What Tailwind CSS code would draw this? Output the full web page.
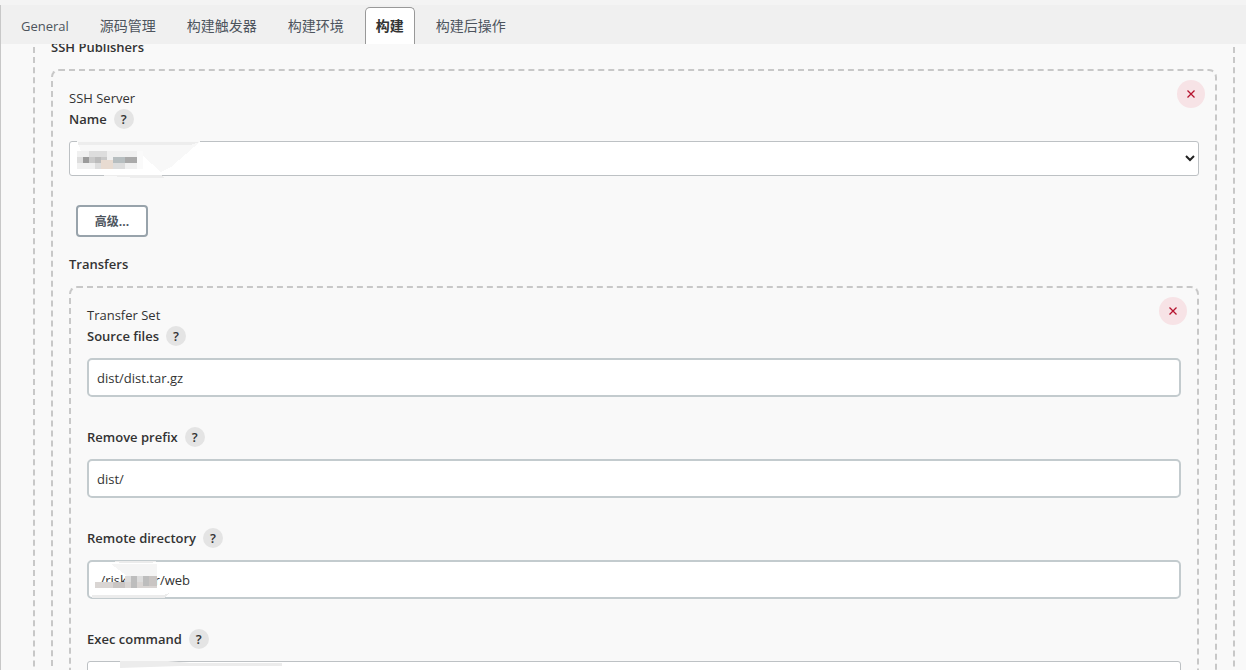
<!DOCTYPE html>
<html lang="zh-CN">
<head>
<meta charset="utf-8">
<meta name="viewport" content="width=device-width, initial-scale=1">
<title>构建</title>
<script src="https://cdn.jsdelivr.net/npm/@tailwindcss/browser@4"></script>
</head>
<body class="h-screen overflow-hidden bg-[#f9f9f9] font-['Open_Sans','Noto_Sans_CJK_SC',sans-serif] text-[13px] leading-[21px] text-[#333]">
<div class="flex h-full flex-col">
  <header class="relative z-10 h-11 shrink-0 border-t-[5px] border-[#f4f4f4] bg-[#f0f0f0]">
    <nav class="flex h-full items-end border-l border-[#c8c8c8] pl-2 text-[14px] text-[#4d545d]">
      <a href="#general" class="px-3 pb-[7px] text-[13px]">General</a>
      <a href="#scm" class="ml-[7px] px-3 pb-2">源码管理</a>
      <a href="#triggers" class="ml-[7px] px-3 pb-2">构建触发器</a>
      <a href="#env" class="ml-[7px] px-3 pb-2">构建环境</a>
      <a href="#build" aria-current="page" class="ml-[9px] rounded-t-[5px] border border-b-0 border-[#999] bg-white px-[10px] pt-[7px] pb-2 font-bold text-[#333]">构建</a>
      <a href="#post" class="ml-[9px] px-3 pb-2">构建后操作</a>
    </nav>
  </header>
  <main class="min-h-0 flex-1 overflow-hidden border-l border-[#c8c8c8] pr-[11px] pl-8">
    <section class="-mt-[7px] border-x-2 border-dashed border-[#c8c8c8] px-4">
      <h2 class="font-semibold">SSH Publishers</h2>
      <section class="relative mt-[11px] rounded-t-lg border-2 border-b-0 border-dashed border-[#c8c8c8] px-4 pt-[17px]">
        <button aria-label="Delete server" class="absolute top-[9px] right-[10px] flex size-7 items-center justify-center rounded-full bg-[#f7e3e6] text-[#b5122e]">
          <svg class="size-[8px]" viewBox="0 0 8 8" fill="none" stroke="currentColor" stroke-width="1.3"><path d="M.5.5l7 7M7.5.5l-7 7"/></svg>
        </button>
        <h3>SSH Server</h3>
        <div class="flex h-[21px] items-center gap-[7px]">
          <label for="name" class="font-semibold">Name</label>
          <button aria-label="Help: Name" class="-mt-[2px] size-5 rounded-full bg-[#e4e4e4] text-center text-[13px] leading-5 font-semibold">?</button>
        </div>
        <div class="relative mt-[11px]">
          <select id="name" class="block h-[35px] w-full appearance-none rounded-[3px] border border-[#bdc1c4] bg-white"><option></option></select>
          <!-- redacted server name -->
          <svg class="pointer-events-none absolute top-0 left-2 h-[38px] w-[124px]" viewBox="0 0 124 38" shape-rendering="crispEdges" aria-hidden="true">
            <path fill="#f8f8f8" d="M0 0h124l-30 26-10 5-18-16H6z"/>
            <path fill="#ededed" d="M1 1h122l-10 3H1zM20 34h65l2 3H60z"/>
            <path fill="#f0f0f0" d="M0 10h66v18H0z"/>
            <path fill="#ddd" d="M12 10h18v6H12zM0 16h6v6H0zM18 22h6v6h-6zM36 22h12v6H36z"/>
            <path fill="#9b9b9b" d="M6 16h6v6H6z"/><path fill="#c9c9c9" d="M12 16h6v6h-6zM24 16h6v6h-6z"/>
            <path fill="#b7bec0" d="M36 16h12v6H36z"/><path fill="#aaa" d="M48 16h12v6H48z"/>
            <path fill="#bbb" d="M18 16h6v6h-6z"/><path fill="#e8dbd1" d="M24 19h12v9H24z"/><path fill="#fafafa" d="M60 10h6v18h-6z"/>
          </svg>
          <svg class="pointer-events-none absolute top-[14px] right-1 h-[7px] w-[10px]" viewBox="0 0 10 7" fill="none" stroke="#222" stroke-width="2"><path d="M1 1l4 4 4-4"/></svg>
        </div>
        <button class="mt-[29px] ml-[7px] block h-8 w-[72px] rounded border-2 border-[#98a3ab] bg-white text-[12px] font-bold text-[#4d545d]">高级...</button>
        <h3 class="mt-[17px] font-semibold">Transfers</h3>
        <section class="relative mt-[11px] rounded-t-lg border-2 border-b-0 border-dashed border-[#c8c8c8] px-4 pt-[17px]">
          <button aria-label="Delete transfer set" class="absolute top-[9px] right-[10px] flex size-7 items-center justify-center rounded-full bg-[#f7e3e6] text-[#b5122e]">
            <svg class="size-[8px]" viewBox="0 0 8 8" fill="none" stroke="currentColor" stroke-width="1.3"><path d="M.5.5l7 7M7.5.5l-7 7"/></svg>
          </button>
          <h4>Transfer Set</h4>
          <div class="flex flex-col gap-[30px]">
            <div>
              <div class="flex h-[21px] items-center gap-[7px]">
                <label for="source" class="font-semibold">Source files</label>
                <button aria-label="Help: Source files" class="-mt-[2px] size-5 rounded-full bg-[#e4e4e4] text-center text-[13px] leading-5 font-semibold">?</button>
              </div>
              <input id="source" type="text" value="dist/dist.tar.gz" class="mt-[11px] block h-[39px] w-full rounded-[5px] border-2 border-[#c3cbce] bg-white px-2">
            </div>
            <div>
              <div class="flex h-[21px] items-center gap-[7px]">
                <label for="prefix" class="font-semibold">Remove prefix</label>
                <button aria-label="Help: Remove prefix" class="-mt-[2px] size-5 rounded-full bg-[#e4e4e4] text-center text-[13px] leading-5 font-semibold">?</button>
              </div>
              <input id="prefix" type="text" value="dist/" class="mt-[11px] block h-[39px] w-full rounded-[5px] border-2 border-[#c3cbce] bg-white px-2">
            </div>
            <div>
              <div class="flex h-[21px] items-center gap-[7px]">
                <label for="remote" class="font-semibold">Remote directory</label>
                <button aria-label="Help: Remote directory" class="-mt-[2px] size-5 rounded-full bg-[#e4e4e4] text-center text-[13px] leading-5 font-semibold">?</button>
              </div>
              <div class="relative mt-[11px]">
                <input id="remote" type="text" value="./risk......er/web" class="block h-[39px] w-full rounded-[5px] border-2 border-[#c3cbce] bg-white px-2">
                <!-- redacted part of the path -->
                <svg class="pointer-events-none absolute top-0 left-1 h-10 w-20" viewBox="0 0 80 40" shape-rendering="crispEdges" aria-hidden="true">
                  <path fill="#ececec" d="M22 1h44l-6 2H30zM1 35h72l5-2-4 5H1z"/>
                  <path fill="#f5f5f5" d="M20 4h46v12H36z"/>
                  <path fill="#d9d5d3" d="M4 22h62v6H4z"/>
                  <path fill="#ddd" d="M34 16h32v6H34z"/>
                  <path fill="#bdbdbd" d="M40 16h6v12h-6zM52 16h6v10h-6z"/>
                  <path fill="#c9c5c3" d="M22 22h12v6H22zM58 16h8v10h-8z"/>
                </svg>
              </div>
            </div>
            <div>
              <div class="flex h-[21px] items-center gap-[7px]">
                <label for="exec" class="font-semibold">Exec command</label>
                <button aria-label="Help: Exec command" class="-mt-[2px] size-5 rounded-full bg-[#e4e4e4] text-center text-[13px] leading-5 font-semibold">?</button>
              </div>
              <div class="relative mt-[11px]">
                <textarea id="exec" class="block h-24 w-full resize-none rounded-[3px] border border-[#bdc1c4] bg-white"></textarea>
                <svg class="pointer-events-none absolute top-0 left-[33px] h-2 w-[162px]" viewBox="0 0 162 8" aria-hidden="true"><path fill="#ececec" d="M0 0h48l22 2h92v3H60L0 7z"/></svg>
              </div>
            </div>
          </div>
        </section>
      </section>
    </section>
  </main>
</div>
</body>
</html>
